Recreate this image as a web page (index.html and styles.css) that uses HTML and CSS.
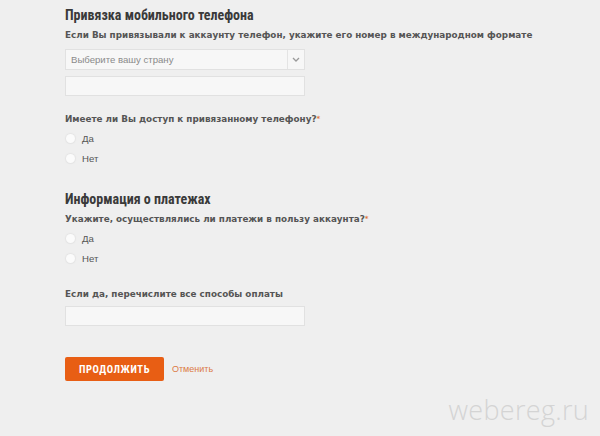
FILE: index.html
```html
<!DOCTYPE html>
<html lang="ru">
<head>
<meta charset="utf-8">
<link rel="stylesheet" href="styles.css">
</head>
<body>
<div class="page">
  <h2 class="heading">Привязка мобильного телефона</h2>
  <div class="label">Если Вы привязывали к аккаунту телефон, укажите его номер в международном формате</div>
  <div class="select">
    <span class="select-text">Выберите вашу страну</span>
    <span class="select-arrow">
      <svg width="8" height="5" viewBox="0 0 8 5"><path d="M1 1 L4 4 L7 1" fill="none" stroke="#9a9a9a" stroke-width="1.3"/></svg>
    </span>
  </div>
  <div class="input"></div>

  <div class="label q1">Имеете ли Вы доступ к привязанному телефону?<span class="req">*</span></div>
  <div class="radios">
    <div class="radio"><span class="dot"></span><span>Да</span></div>
    <div class="radio"><span class="dot"></span><span>Нет</span></div>
  </div>

  <h2 class="heading h2">Информация о платежах</h2>
  <div class="label">Укажите, осуществлялись ли платежи в пользу аккаунта?<span class="req">*</span></div>
  <div class="radios">
    <div class="radio"><span class="dot"></span><span>Да</span></div>
    <div class="radio"><span class="dot"></span><span>Нет</span></div>
  </div>

  <div class="label q3">Если да, перечислите все способы оплаты</div>
  <div class="input"></div>

  <div class="actions">
    <button class="btn">ПРОДОЛЖИТЬ</button>
    <a class="cancel">Отменить</a>
  </div>
</div>
<div class="watermark">webereg.ru</div>
</body>
</html>
```

FILE: styles.css
```css
html, body {
  margin: 0;
  padding: 0;
  width: 600px;
  height: 436px;
  overflow: hidden;
  background: #efefef;
}
.page {
  padding: 7px 0 0 65px;
  font-family: "Liberation Sans", Arial, sans-serif;
  color: #555;
}
.heading {
  margin: 0;
  font-family: "Liberation Sans Narrow", "Roboto Condensed", "DejaVu Sans Condensed", sans-serif;
  font-stretch: condensed;
  font-weight: bold;
  font-size: 14px;
  line-height: 16px;
  color: #3a3a3a;
}
.h2 {
  margin-top: 27px;
}
.label {
  margin-top: 6px;
  font-family: "DejaVu Sans", Verdana, sans-serif;
  font-weight: bold;
  font-size: 8.8px;
  line-height: 12px;
  color: #555;
}
.req {
  color: #e0763a;
  font-size: 7px;
  vertical-align: top;
}
.select {
  margin-top: 8px;
  width: 238px;
  height: 19px;
  border: 1px solid #e1e1e1;
  background: #f7f7f7;
  display: flex;
  align-items: center;
  justify-content: space-between;
}
.select-text {
  padding-left: 5px;
  font-size: 9.6px;
  color: #8a8a8a;
}
.select-arrow {
  width: 16px;
  height: 19px;
  border-left: 1px solid #e4e4e4;
  display: flex;
  align-items: center;
  justify-content: center;
}
.input {
  margin-top: 6px;
  width: 238px;
  height: 18px;
  border: 1px solid #e1e1e1;
  background: #f7f7f7;
}
.q1 {
  margin-top: 17px;
}
.q3 {
  margin-top: 24px;
}
.radios {
  margin-top: 7px;
  display: flex;
  flex-direction: column;
  gap: 8px;
}
.radio {
  display: flex;
  align-items: center;
  gap: 7px;
  padding-left: 1px;
  height: 12px;
  font-size: 9.6px;
  color: #555;
}
.dot {
  width: 9px;
  height: 9px;
  border-radius: 50%;
  background: #fbfbfb;
  box-shadow: 0 0 1px 1px #e4e4e4;
}
.q3 + .input {
  margin-top: 6px;
}
.actions {
  margin-top: 31px;
  display: flex;
  align-items: center;
  gap: 8px;
}
.btn {
  width: 99px;
  height: 24px;
  border: none;
  border-radius: 2px;
  background: #e85e14;
  color: #fff;
  font-family: "Liberation Sans Narrow", "Roboto Condensed", "DejaVu Sans Condensed", sans-serif;
  font-stretch: condensed;
  font-weight: bold;
  font-size: 10.5px;
  letter-spacing: 0.6px;
  padding: 0;
}
.cancel {
  font-size: 9px;
  color: #dc7a45;
}
.watermark {
  position: absolute;
  right: 11px;
  bottom: 8px;
  font-family: "Open Sans", "DejaVu Sans", sans-serif;
  font-weight: 300;
  font-size: 27px;
  color: #d4d4d4;
  letter-spacing: 0.3px;
}
```
